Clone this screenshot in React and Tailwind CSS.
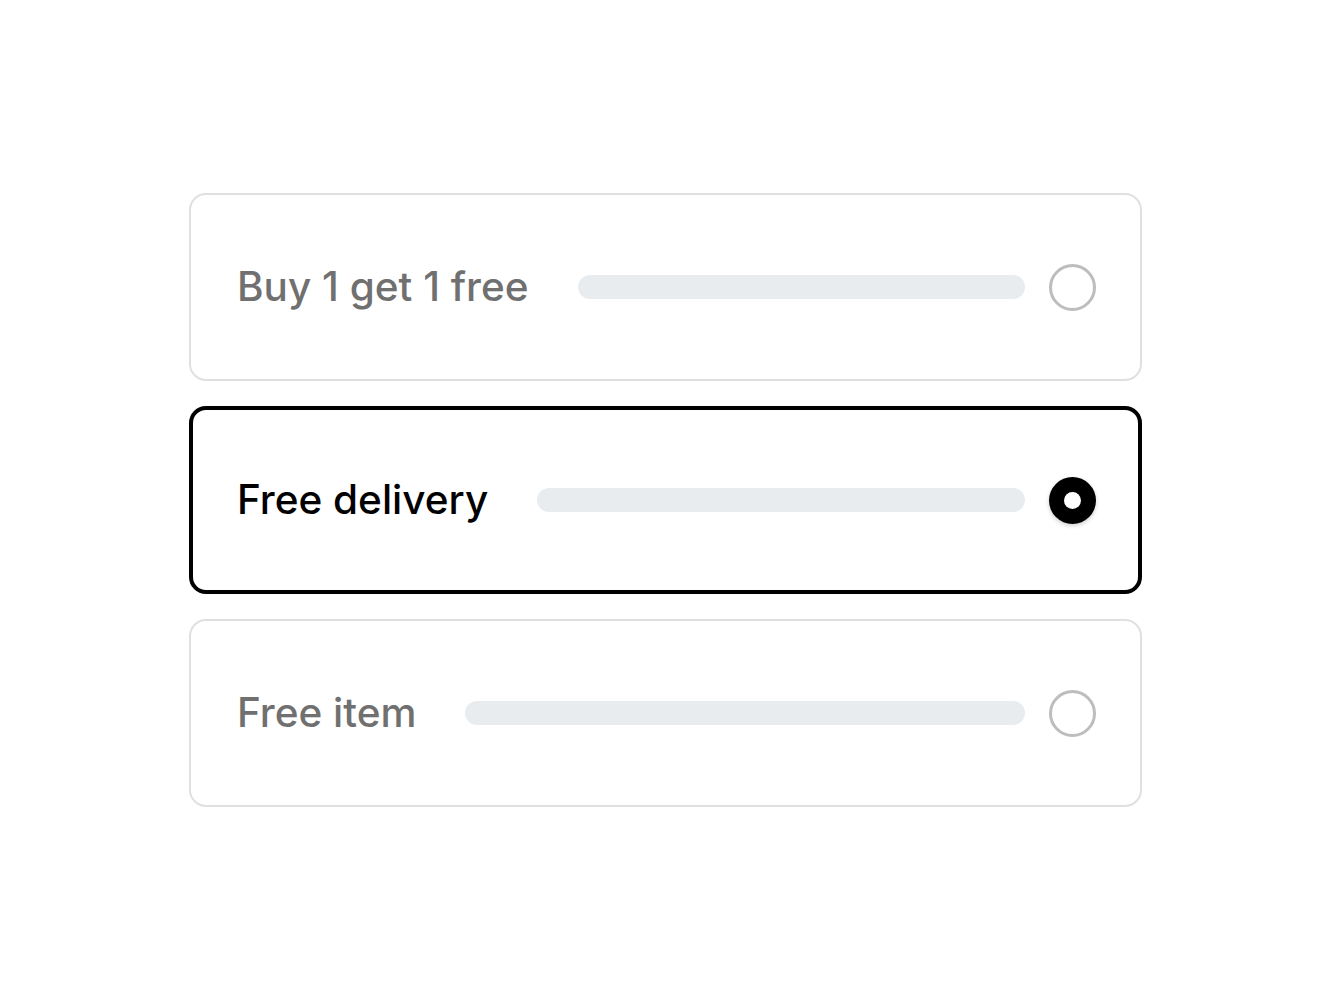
import { useState } from "react";

const offers = [
  { id: "bogo", label: "Buy 1 get 1 free" },
  { id: "delivery", label: "Free delivery" },
  { id: "item", label: "Free item" },
];

function Radio({ checked }) {
  if (checked) {
    return (
      <span className="flex h-[47px] w-[47px] shrink-0 items-center justify-center rounded-full bg-black shadow-[0_2px_4px_rgba(0,0,0,0.18)]">
        <span className="h-[17px] w-[17px] rounded-full bg-white" />
      </span>
    );
  }
  return (
    <span className="h-[47px] w-[47px] shrink-0 rounded-full border-[3px] border-[#bdbdbd] bg-white" />
  );
}

export default function App() {
  const [selected, setSelected] = useState("delivery");

  return (
    <div
      className="flex h-[1000px] w-full items-center bg-white pl-[189px]"
      style={{ fontFamily: "Inter, 'Noto Sans', sans-serif" }}
    >
      <div className="flex w-[953px] flex-col gap-[25px]">
        {offers.map((offer) => {
          const active = offer.id === selected;
          return (
            <button
              key={offer.id}
              type="button"
              onClick={() => setSelected(offer.id)}
              className={
                active
                  ? "flex h-[188px] items-center rounded-[17px] border-4 border-black bg-white pl-[44px] pr-[42px] text-left"
                  : "flex h-[188px] items-center rounded-[17px] border-2 border-[#e0e0e0] bg-white pl-[46px] pr-[44px] text-left"
              }
            >
              <span
                className={
                  active
                    ? "shrink-0 text-[40.5px] font-medium leading-none text-black"
                    : "shrink-0 text-[40.5px] font-medium leading-none text-[#707070]"
                }
              >
                {offer.label}
              </span>
              <span className="ml-[49px] mr-[24px] h-[24px] flex-1 rounded-full bg-[#e9ecef]" />
              <Radio checked={active} />
            </button>
          );
        })}
      </div>
    </div>
  );
}
